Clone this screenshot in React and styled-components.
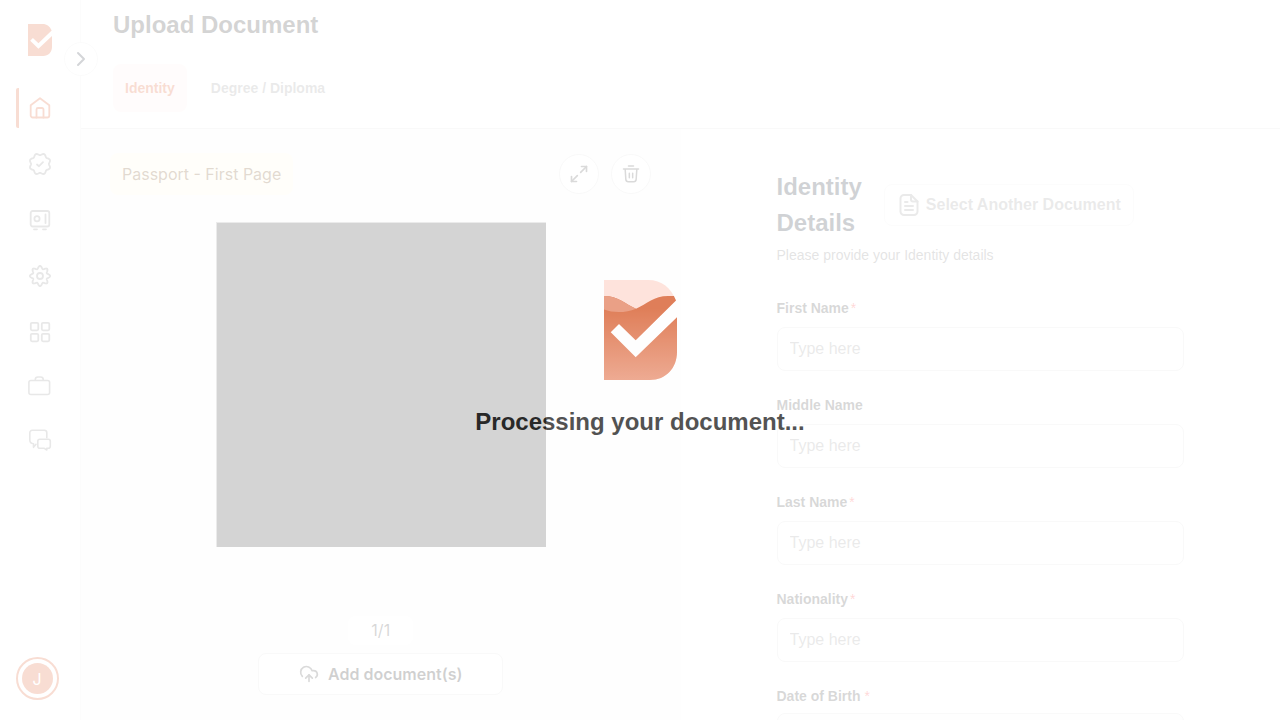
import React from "react";
import styled, { createGlobalStyle, css } from "styled-components";
import { ChevronRight, CloudUpload, Maximize2 } from "lucide-react";

const Global = createGlobalStyle`
  *, *::before, *::after { box-sizing: border-box; }
  body {
    margin: 0;
    background: #fff;
    font-family: "Liberation Sans", Arial, sans-serif;
    color: #282828;
  }
  button, input { font: inherit; color: inherit; }
  button { cursor: pointer; }
  h1, h2, p, ul { margin: 0; padding: 0; }
`;

const brand = "#dc5523";
const line = "#dedede";

const Shell = styled.div`
  display: flex;
  height: 100vh;
  overflow: hidden;
`;

const Sidebar = styled.aside`
  position: relative;
  z-index: 1;
  flex: none;
  display: flex;
  flex-direction: column;
  align-items: center;
  width: 81px;
  padding: 24px 0 20px;
  border-right: 1px solid #f0f0f0;
  background: #fff;
`;

const CollapseButton = styled.button`
  position: absolute;
  top: 42px;
  right: -18px;
  display: flex;
  align-items: center;
  justify-content: center;
  width: 34px;
  height: 34px;
  padding: 0;
  border: 1px solid #ebebeb;
  border-radius: 50%;
  background: #fff;
  color: #28303f;
`;

const Nav = styled.nav`
  display: flex;
  flex-direction: column;
  gap: 14px;
  width: 100%;
  margin-top: 32px;
`;

const NavGroup = styled.ul`
  display: flex;
  flex-direction: column;
  gap: ${(p) => p.$gap}px;
  list-style: none;
`;

const NavLink = styled.a`
  display: flex;
  align-items: center;
  justify-content: center;
  height: 40px;
  margin: 0 16px;
  padding-right: 1px;
  color: #8c8c8c;
  ${(p) =>
    p.$active &&
    css`
      padding-right: 4px;
      border-left: 3px solid ${brand};
      border-radius: 2px 0 0 2px;
      color: ${brand};
    `}
`;

const Avatar = styled.button`
  display: flex;
  width: 43px;
  height: 43px;
  margin: auto 22px 0 16px;
  padding: 4px;
  border: 2px solid ${brand};
  border-radius: 50%;
  background: #fff;
  font-family: Inter, sans-serif;
  font-size: 16px;

  span {
    flex: 1;
    align-self: stretch;
    display: flex;
    align-items: center;
    justify-content: center;
    border-radius: 50%;
    background: ${brand};
    color: #fff;
  }
`;

const Main = styled.main`
  flex: 1;
  min-width: 0;
  display: flex;
  flex-direction: column;
`;

const Header = styled.header`
  flex: none;
  padding: 9px 32px 16px;
  border-bottom: 1px solid ${line};
`;

const PageTitle = styled.h1`
  font-size: 24px;
  line-height: 32px;
`;

const Tabs = styled.div`
  display: flex;
  gap: 12px;
  margin-top: 23px;
`;

const Tab = styled.button`
  height: 48px;
  padding: 0 12px;
  border: 0;
  border-radius: 8px;
  background: ${(p) => (p.$active ? "#fff0ed" : "transparent")};
  color: ${(p) => (p.$active ? brand : "#969696")};
  font-size: 14px;
  font-weight: 700;
`;

const Columns = styled.div`
  flex: 1;
  min-height: 0;
  display: grid;
  grid-template-columns: 1fr 1fr;
`;

const Viewer = styled.section`
  display: flex;
  flex-direction: column;
  align-items: center;
  padding: 24px 29px;
  background: #f8f8f8;
  font-family: Inter, sans-serif;
`;

const ViewerBar = styled.div`
  display: flex;
  align-items: center;
  gap: 12px;
  width: 100%;
  padding-right: 1px;
`;

const Tag = styled.span`
  margin-right: auto;
  padding: 0 12px;
  border-radius: 8px;
  background: #fffbe6;
  color: #6e4614;
  font-size: 16px;
  line-height: 42px;
`;

const RoundButton = styled.button`
  display: flex;
  align-items: center;
  justify-content: center;
  width: 40px;
  height: 40px;
  padding: 0;
  border: 1px solid ${line};
  border-radius: 50%;
  background: #fff;
  color: #464646;
`;

const Preview = styled.div`
  width: 330px;
  height: 325px;
  margin-top: 27px;
  border: 1px solid #9a9a9a;
  border-width: 1px 0 0 1px;
  background: #2b2b2b;
`;

const Counter = styled.span`
  margin-top: 69px;
  padding: 0 23px;
  border-radius: 8px;
  background: #fff;
  color: #3c3c3c;
  font-size: 16px;
  line-height: 29px;
`;

const OutlineButton = styled.button`
  display: flex;
  align-items: center;
  justify-content: center;
  height: 42px;
  border: 1px solid ${(p) => (p.$soft ? "#ededed" : line)};
  border-radius: 8px;
  background: #fff;
  color: ${(p) => (p.$soft ? "#969696" : "#141414")};
  font-size: 16px;
  font-weight: ${(p) => (p.$soft ? 700 : 600)};
  white-space: nowrap;
`;

const AddButton = styled(OutlineButton)`
  gap: 9px;
  margin-top: 8px;
  padding: 0 40px;
  svg { color: #464646; }
`;

const SelectButton = styled(OutlineButton)`
  gap: 5px;
  padding: 0 12px;
`;

const Details = styled.section`
  padding: 40px 96px 24px;
  overflow: hidden;
`;

const DetailsHead = styled.div`
  display: flex;
  align-items: center;
  gap: 22px;
`;

const DetailsTitle = styled.h2`
  width: min-content;
  color: #141e2d;
  font-size: 24px;
  line-height: 36px;
`;

const Hint = styled.p`
  margin-top: 4px;
  color: #787878;
  font-size: 14px;
  line-height: 21px;
`;

const Form = styled.form`
  display: flex;
  flex-direction: column;
  gap: 24px;
  margin-top: 32px;
`;

const Field = styled.div`
  display: flex;
  flex-direction: column;
  gap: ${(p) => (p.$tight ? 6 : 8)}px;
`;

const Label = styled.label`
  display: flex;
  gap: ${(p) => (p.$tight ? 4 : 2)}px;
  color: #3c3c3c;
  font-size: 14px;
  font-weight: 700;
  line-height: 21px;
`;

const Required = styled.span`
  color: #ff3b3b;
  font-size: 14px;
  font-weight: 400;
`;

const Input = styled.input`
  width: 100%;
  height: 44px;
  padding: 0 12px;
  border: 1px solid ${line};
  border-radius: 8px;
  background: ${(p) => (p.$muted ? "#fafafa" : "#fff")};
  font-size: 16px;
  &::placeholder { color: #969696; opacity: 1; }
`;

const Overlay = styled.div`
  position: fixed;
  inset: 0;
  z-index: 10;
  display: flex;
  flex-direction: column;
  align-items: center;
  justify-content: center;
  gap: 24px;
  background: #fff;
  opacity: 0.8;
`;

const OverlayText = styled.p`
  color: #292929;
  font-size: 24px;
  font-weight: 700;
  line-height: 36px;
`;

/* Closed outline whose radius swings `lobes` times round the centre. */
function scallop(radius, depth, lobes, phase) {
  const points = [];
  for (let i = 0; i < 144; i += 1) {
    const a = (i / 144) * Math.PI * 2;
    const r = radius + depth * Math.cos(lobes * a + phase);
    points.push(`${(12 + r * Math.sin(a)).toFixed(2)} ${(12 - r * Math.cos(a)).toFixed(2)}`);
  }
  return `M${points.join("L")}Z`;
}

const Icon = ({ size = 24, width = 1.8, children }) => (
  <svg
    width={size}
    height={size}
    viewBox="0 0 24 24"
    fill="none"
    stroke="currentColor"
    strokeWidth={width}
    strokeLinecap="round"
    strokeLinejoin="round"
    aria-hidden="true"
  >
    {children}
  </svg>
);

const HomeIcon = () => (
  <Icon>
    <path d="M2.7 9.3 12 2.2l9.3 7.1v10.2a2 2 0 0 1-2 2H4.700a2 2 0 0 1-2-2Z" />
    <path d="M8.500 21.500v-8a1.500 1.500 0 0 1 1.500-1.500h4a1.500 1.500 0 0 1 1.500 1.500v8" />
  </Icon>
);

const VerifiedIcon = () => (
  <Icon>
    <path d={scallop(9.8, 0.9, 8, Math.PI)} />
    <path d="m9 12.500 2 1.700 4-4" />
  </Icon>
);

const SafeIcon = () => (
  <Icon>
    <rect x="2.700" y="3" width="18.600" height="15.500" rx="2" />
    <circle cx="9" cy="10.800" r="2.600" />
    <path d="M17.500 6.500v8.500M6 21.300h3M15 21.300h3" />
  </Icon>
);

const GearIcon = () => (
  <Icon>
    <path d={scallop(8.7, 1.4, 8, 0)} />
    <circle cx="12" cy="12" r="3" />
  </Icon>
);

const GridIcon = () => (
  <Icon>
    {[2.8, 13.8].map((x) =>
      [2.8, 13.8].map((y) => (
        <rect key={`${x}-${y}`} x={x} y={y} width="7.500" height="7.500" rx="1.200" />
      ))
    )}
  </Icon>
);

const BriefcaseIcon = () => (
  <Icon width={1.600}>
    <rect x="0.900" y="6.500" width="20.700" height="14" rx="2" />
    <path d="M7.300 6.300V5.500c0-1.500 1.200-2.500 2.700-2.500h2.500c1.500 0 2.700 1 2.700 2.500v.8" />
  </Icon>
);

const ChatIcon = () => (
  <Icon width={1.600}>
    <path d="M8 16.300 5.500 19.300v-3.600C3 15.500 1.800 14 1.800 12V4.800a2.500 2.500 0 0 1 2.500-2.500h12a2.500 2.500 0 0 1 2.500 2.500v5" />
    <path d="M11.800 11.300h8.500a2 2 0 0 1 2 2v5a2 2 0 0 1-2 2h-1.500v1.700l-2.500-1.700h-4.500a2 2 0 0 1-2-2v-5a2 2 0 0 1 2-2Z" />
  </Icon>
);

const TrashIcon = () => (
  <Icon size={20} width={1.8}>
    <path d="M9 2.500h6M3 6h18M5 6l.8 12.400a3 3 0 0 0 3 2.800h6.400a3 3 0 0 0 3-2.800L19 6M10 11v5.500M14 11v5.500" />
  </Icon>
);

const FileIcon = () => (
  <Icon width={2}>
    <path d="M14 2H7a3.500 3.500 0 0 0-3.500 3.500v13A3.500 3.500 0 0 0 7 22h10a3.500 3.500 0 0 0 3.500-3.500V8.500Z" />
    <path d="M14 2v4.500a2 2 0 0 0 2 2h4.500M8 9h2.500M8 13h8M8 17h8" />
  </Icon>
);

const BODY = "M0 0H44C58 0 67 8 72 20.500L31.700 60.300 15 44 6.700 52.300 31.700 77.300 73 37.300V72C73 88 62 100 46 100H0Z";

const SmallLogo = () => (
  <svg width="24" height="32" viewBox="0 0 73 100" preserveAspectRatio="none" role="img" aria-label="Home">
    <path fill={brand} d={BODY} />
  </svg>
);

const LoadingLogo = () => (
  <svg width="73" height="100" viewBox="0 0 73 100" aria-hidden="true">
    <defs>
      <linearGradient id="fill" x1="0" y1="0" x2="0" y2="1">
        <stop offset="0.150" stopColor="#d96031" />
        <stop offset="1" stopColor="#eb9779" />
      </linearGradient>
      <clipPath id="body">
        <path d={BODY} />
      </clipPath>
    </defs>
    <g clipPath="url(#body)">
      <path fill="#ffded5" d="M0 0h73v100H0Z" />
      <path fill="url(#fill)" d="M0 16C14 16 21 24 32 28.700C43 24 50 16 64 16H73V100H0Z" />
      <path fill="#e68a69" d="M0 16C14 16 21 24 32 28.700C22 33 9 33 0 29.500Z" />
    </g>
  </svg>
);

const primaryNav = [
  ["Home", HomeIcon],
  ["Verification", VerifiedIcon],
  ["Vault", SafeIcon],
  ["Settings", GearIcon],
  ["Apps", GridIcon],
];
const secondaryNav = [
  ["Jobs", BriefcaseIcon],
  ["Messages", ChatIcon],
];

const fields = [
  { id: "first-name", label: "First Name", required: true },
  { id: "middle-name", label: "Middle Name" },
  { id: "last-name", label: "Last Name", required: true },
  { id: "nationality", label: "Nationality", required: true },
  { id: "birth-date", label: "Date of Birth", required: true, tight: true },
];

const NavItems = ({ items, gap, active }) => (
  <NavGroup $gap={gap}>
    {items.map(([name, Glyph]) => (
      <li key={name}>
        <NavLink href="#" aria-label={name} $active={name === active}>
          <Glyph />
        </NavLink>
      </li>
    ))}
  </NavGroup>
);

export default function App() {
  return (
    <>
      <Global />
      <Shell>
        <Sidebar>
          <SmallLogo />
          <CollapseButton aria-label="Expand sidebar">
            <ChevronRight size={24} strokeWidth={2} />
          </CollapseButton>
          <Nav>
            <NavItems items={primaryNav} gap={16} active="Home" />
            <NavItems items={secondaryNav} gap={14} />
          </Nav>
          <Avatar aria-label="Account">
            <span>J</span>
          </Avatar>
        </Sidebar>
        <Main>
          <Header>
            <PageTitle>Upload Document</PageTitle>
            <Tabs role="tablist">
              <Tab role="tab" aria-selected="true" $active>Identity</Tab>
              <Tab role="tab" aria-selected="false">Degree / Diploma</Tab>
            </Tabs>
          </Header>
          <Columns>
            <Viewer>
              <ViewerBar>
                <Tag>Passport - First Page</Tag>
                <RoundButton aria-label="Full screen">
                  <Maximize2 size={20} strokeWidth={2} />
                </RoundButton>
                <RoundButton aria-label="Delete">
                  <TrashIcon />
                </RoundButton>
              </ViewerBar>
              <Preview role="img" aria-label="Passport first page" />
              <Counter>1/1</Counter>
              <AddButton>
                <CloudUpload size={20} strokeWidth={2} />
                Add document(s)
              </AddButton>
            </Viewer>
            <Details>
              <DetailsHead>
                <DetailsTitle>Identity Details</DetailsTitle>
                <SelectButton $soft>
                  <FileIcon />
                  Select Another Document
                </SelectButton>
              </DetailsHead>
              <Hint>Please provide your Identity details</Hint>
              <Form>
                {fields.map((f) => (
                  <Field key={f.id} $tight={f.tight}>
                    <Label htmlFor={f.id} $tight={f.tight}>
                      {f.label}
                      {f.required && <Required>*</Required>}
                    </Label>
                    <Input id={f.id} placeholder="Type here" $muted={f.tight} />
                  </Field>
                ))}
              </Form>
            </Details>
          </Columns>
        </Main>
      </Shell>
      <Overlay role="status">
        <LoadingLogo />
        <OverlayText>Processing your document...</OverlayText>
      </Overlay>
    </>
  );
}
